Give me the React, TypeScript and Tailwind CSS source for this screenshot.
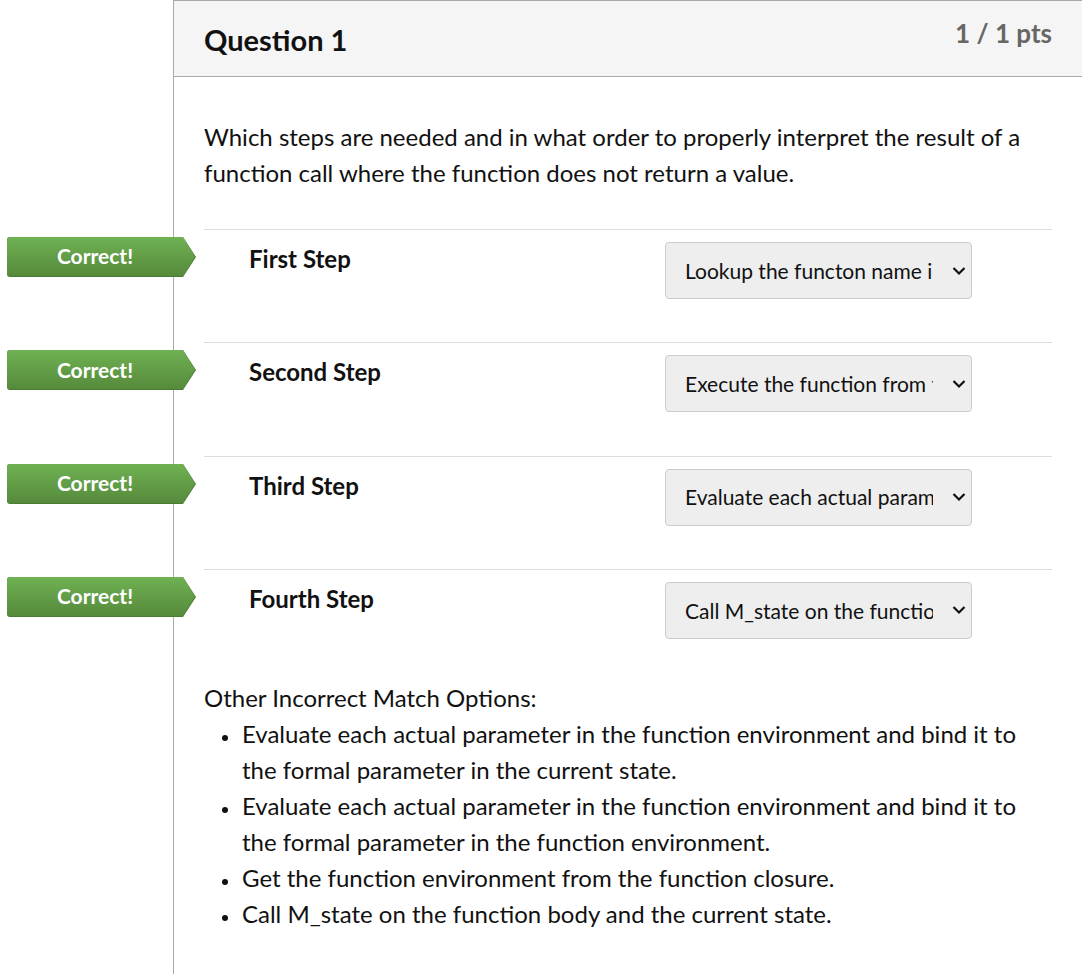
const steps = [
  { label: "First Step", choice: "Lookup the functon name in the current state" },
  { label: "Second Step", choice: "Execute the function from the closure" },
  { label: "Third Step", choice: "Evaluate each actual parameter in the current state" },
  { label: "Fourth Step", choice: "Call M_state on the function body" },
];

const others = [
  "Evaluate each actual parameter in the function environment and bind it to the formal parameter in the current state.",
  "Evaluate each actual parameter in the function environment and bind it to the formal parameter in the function environment.",
  "Get the function environment from the function closure.",
  "Call M_state on the function body and the current state.",
];

function CorrectBadge() {
  return (
    <div className="absolute left-[-197px] top-[7px] h-[41px] w-[190px]">
      <svg width="190" height="41" viewBox="0 0 190 41" className="absolute inset-0">
        <defs>
          <linearGradient id="g" x1="0" y1="0" x2="0" y2="1">
            <stop offset="0" stopColor="#6fb153" />
            <stop offset="1" stopColor="#568a3b" />
          </linearGradient>
        </defs>
        <path d="M3 0 H176 L189 20 L176 40 H3 Q0 40 0 37 V3 Q0 0 3 0 Z" fill="#4d7d35" />
        <path d="M3 0 H176 L188 19.5 L176 39 H3 Q0 39 0 36 V3 Q0 0 3 0 Z" fill="url(#g)" />
      </svg>
      <div className="relative flex h-[40px] w-[176px] items-center justify-center pb-[2px] text-[21px] font-bold text-white">
        Correct!
      </div>
    </div>
  );
}

function FakeSelect({ value }: { value: string }) {
  return (
    <div className="flex h-[57px] w-[307px] items-center rounded-[4px] border border-[#cccccc] bg-[#eeeeee] pl-[19px] pr-[5px]">
      <div className="w-[248px] overflow-hidden whitespace-nowrap text-[21px] text-[#111]">{value}</div>
      <svg width="14" height="10" viewBox="0 0 14 10" className="ml-auto">
        <path d="M1.5 2 L7 7.5 L12.5 2" fill="none" stroke="#111" strokeWidth="2.2" />
      </svg>
    </div>
  );
}

export default function App() {
  return (
    <div className="h-[974px] w-[1082px] overflow-hidden bg-white font-['Lato','Liberation_Sans',sans-serif] text-[#111]">
      <div className="ml-[173px] min-h-[974px] w-[909px] border-l border-t border-[#aaaaaa]">
        {/* Header */}
        <div className="flex h-[76px] items-start justify-between border-b border-[#aaaaaa] bg-[#f5f5f5] pl-[30px] pr-[30px]">
          <h2 className="pt-[21px] text-[29px] font-bold leading-[36px]">Question 1</h2>
          <div className="pt-[15px] text-[26px] font-bold leading-[34px] text-[#666666]">1 / 1 pts</div>
        </div>

        {/* Body */}
        <div className="px-[30px] pt-[42px]">
          <p className="text-[24px] leading-[36px]">
            Which steps are needed and in what order to properly interpret the result of a function call where the
            function does not return a value.
          </p>

          <div className="mt-[38px]">
            {steps.map((s) => (
              <div key={s.label} className="relative flex h-[113.3px] border-t border-[#dddddd] pt-[12px]">
                <CorrectBadge />
                <div className="w-[461px] pl-[45px] text-[24px] font-bold leading-[33px]">{s.label}</div>
                <FakeSelect value={s.choice} />
              </div>
            ))}
          </div>

          <div className="mt-[-2px] text-[24px] leading-[36px]">
            <p>Other Incorrect Match Options:</p>
            <ul className="list-none pl-[38px]">
              {others.map((o) => (
                <li
                  key={o}
                  className="relative before:absolute before:left-[-20px] before:top-[19px] before:h-[6px] before:w-[6px] before:rounded-full before:bg-[#111] before:content-['']"
                >
                  {o}
                </li>
              ))}
            </ul>
          </div>
        </div>
      </div>
    </div>
  );
}
